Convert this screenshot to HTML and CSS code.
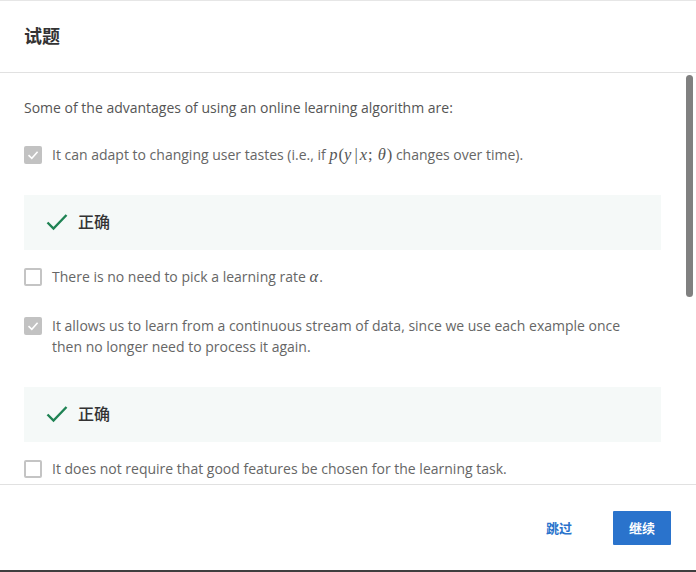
FILE: index.html
```html
<!DOCTYPE html>
<html lang="zh">
<head>
<meta charset="utf-8">
<title>试题</title>
<link rel="stylesheet" href="styles.css">
</head>
<body>
<div class="modal">
  <header class="modal-header">
    <h1 class="title">试题</h1>
  </header>
  <div class="modal-body">
    <div class="content">
      <p class="question">Some of the advantages of using an online learning algorithm are:</p>

      <div class="option">
        <span class="box checked"><svg viewBox="0 0 18 18" width="18" height="18"><path d="M4.5 9.2 L7.8 12.3 L13.6 5.8" fill="none" stroke="#fff" stroke-width="1.6"/></svg></span>
        <span class="label">It can adapt to changing user tastes (i.e., if <span class="math">p</span><span class="paren">(</span><span class="math">y</span><span class="bar">|</span><span class="math">x</span><span class="semi">;</span><span class="math">θ</span><span class="paren">)</span> changes over time).</span>
      </div>
      <div class="feedback">
        <svg class="ok" viewBox="0 0 22 18" width="22" height="18"><path d="M1.5 9.5 L7.5 15.5 L20.5 2" fill="none" stroke="#1f8354" stroke-width="2.4"/></svg>
        <span class="fb-text">正确</span>
      </div>

      <div class="option">
        <span class="box"></span>
        <span class="label">There is no need to pick a learning rate <span class="math">α</span>.</span>
      </div>

      <div class="option gap">
        <span class="box checked"><svg viewBox="0 0 18 18" width="18" height="18"><path d="M4.5 9.2 L7.8 12.3 L13.6 5.8" fill="none" stroke="#fff" stroke-width="1.6"/></svg></span>
        <span class="label">It allows us to learn from a continuous stream of data, since we use each example once then no longer need to process it again.</span>
      </div>
      <div class="feedback">
        <svg class="ok" viewBox="0 0 22 18" width="22" height="18"><path d="M1.5 9.5 L7.5 15.5 L20.5 2" fill="none" stroke="#1f8354" stroke-width="2.4"/></svg>
        <span class="fb-text">正确</span>
      </div>

      <div class="option">
        <span class="box"></span>
        <span class="label">It does not require that good features be chosen for the learning task.</span>
      </div>
    </div>
    <div class="scroll-thumb"></div>
  </div>
  <footer class="modal-footer">
    <button class="btn-skip">跳过</button>
    <button class="btn-next">继续</button>
  </footer>
</div>
<div class="taskbar"></div>
</body>
</html>
```
FILE: styles.css
```css
* { box-sizing: border-box; }
html, body { margin: 0; padding: 0; background: #fff; }
body {
  font-family: "Open Sans", "Noto Sans CJK SC", sans-serif;
  width: 696px;
  height: 572px;
  overflow: hidden;
  display: flex;
  flex-direction: column;
}
.modal {
  flex: 1;
  display: flex;
  flex-direction: column;
  border-top: 1px solid #e6e6e6;
  min-height: 0;
}
.modal-header {
  height: 72px;
  border-bottom: 1px solid #e1e1e1;
  display: flex;
  align-items: center;
  padding: 0 24px;
}
.title {
  margin: 0;
  font-size: 18px;
  font-weight: 700;
  color: #333;
  font-family: "Noto Sans CJK SC", sans-serif;
  line-height: 24px;
  position: relative;
  top: -2px;
}
.modal-body {
  position: relative;
  height: 412px;
  overflow: hidden;
  border-bottom: 1px solid #e1e1e1;
}
.content {
  padding: 24px 35px 0 24px;
  display: flex;
  flex-direction: column;
}
.question {
  margin: 0 0 26px;
  font-size: 14px;
  line-height: 21px;
  color: #555;
}
.option {
  display: flex;
  align-items: flex-start;
  font-size: 14px;
  line-height: 21px;
  color: #666;
  padding-right: 36px;
}
.option.gap { margin-top: 28px; }
.box {
  flex: none;
  width: 18px;
  height: 18px;
  margin-top: 1.5px;
  margin-right: 10px;
  border: 2px solid #c4c4c4;
  border-radius: 2px;
  background: #fff;
  position: relative;
}
.box.checked {
  border: none;
  background: #c2c2c2;
}
.box svg { display: block; }
.math {
  font-family: "Liberation Serif", serif;
  font-style: italic;
  font-size: 16.5px;
  color: #555;
  padding-right: 1px;
}
.paren, .bar, .semi {
  font-family: "Liberation Serif", serif;
  font-size: 16.5px;
  color: #555;
}
.bar { margin: 0 2px; }
.semi { margin-right: 5px; }
.feedback {
  margin: 30px 0 16px;
  height: 55px;
  background: #f5f9f8;
  display: flex;
  align-items: center;
  padding-left: 22px;
}
.ok { display: block; margin-right: 10px; position: relative; top: -1px; }
.fb-text {
  font-family: "Noto Sans CJK SC", sans-serif;
  font-size: 16px;
  font-weight: 500;
  color: #333;
  position: relative;
  top: -2px;
}
.scroll-thumb {
  position: absolute;
  right: 3px;
  top: 2px;
  width: 7px;
  height: 222px;
  border-radius: 4px;
  background: #808080;
}
.modal-footer {
  flex: 1;
  display: flex;
  align-items: center;
  justify-content: flex-end;
  padding: 0 25px 0 0;
  gap: 27px;
}
button {
  font-family: "Noto Sans CJK SC", sans-serif;
  font-size: 13px;
  font-weight: 700;
  border: none;
  cursor: pointer;
}
.btn-skip {
  background: transparent;
  color: #2a73cc;
  height: 34px;
  padding: 0 14px;
}
.btn-next {
  background: #2a73cc;
  color: #fff;
  width: 58px;
  height: 34px;
  border-radius: 1px;
}
.taskbar {
  height: 2px;
  background: #3f3f3f;
  flex: none;
}
```
